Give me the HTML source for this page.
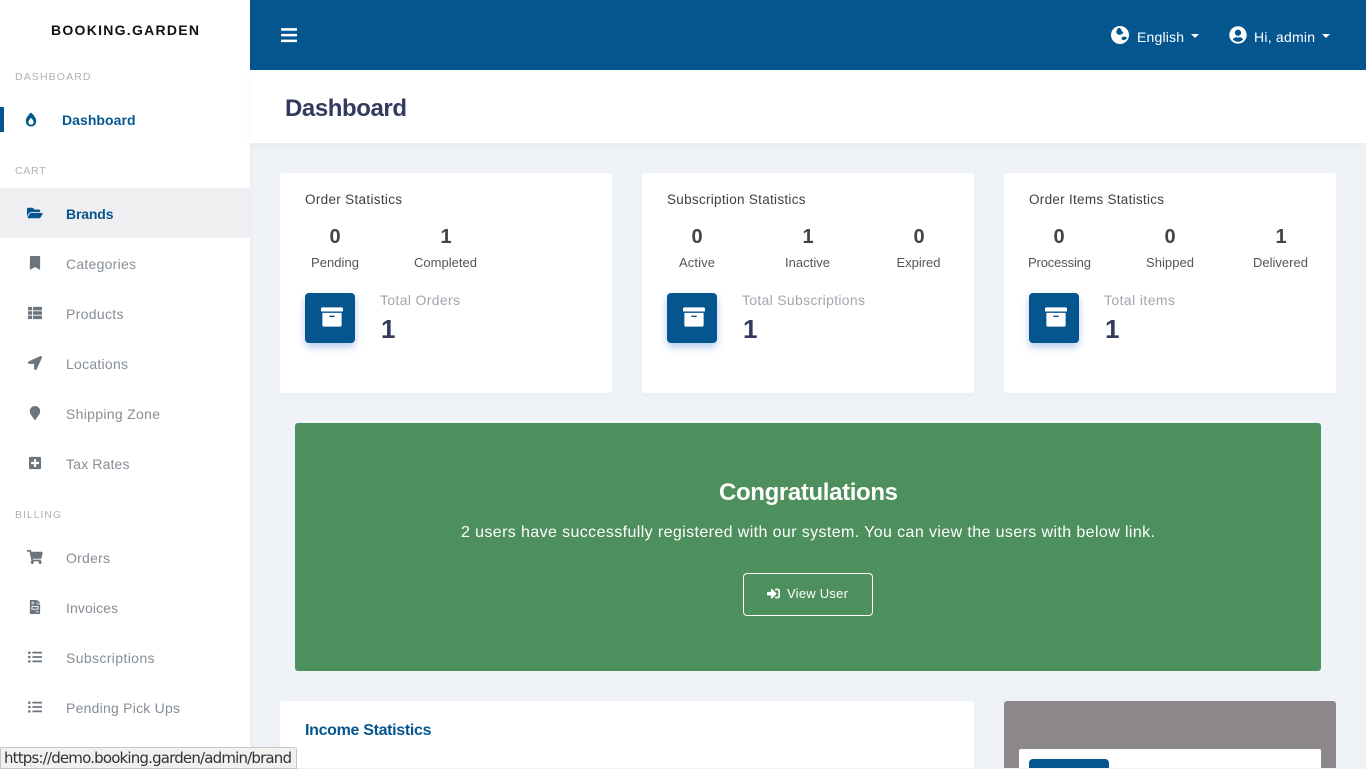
<!DOCTYPE html>
<html lang="en"><head><meta charset="utf-8"><title>Booking.Garden Dashboard</title>
<style>
html,body{margin:0;padding:0;width:1366px;height:768px;overflow:hidden;background:#eff2f6}
div{position:absolute;box-sizing:border-box}
.card{background:#fff;border-radius:3px;box-shadow:0 2px 6px rgba(0,0,0,.02)}
.ib{background:#05568f;border-radius:4px;width:50px;height:50px;top:293px;box-shadow:0 4px 8px rgba(5,86,200,.3)}
svg.o{position:absolute;left:0;top:0}
text{font-family:"Liberation Sans",sans-serif}
.s{fill:#868e96;font-size:14px}
.h{fill:#aeb2b7;font-size:10.5px}
.b{font-weight:700}
.ct{fill:#3f3f41;font-size:13.5px}
.n{fill:#444446;font-size:20px;font-weight:700;text-anchor:middle}
.l{fill:#555558;font-size:13px;text-anchor:middle}
.tt{fill:#a2a7ad;font-size:14px}
.v{fill:#34395e;font-size:26px;font-weight:700}
.w{fill:#fff}
</style></head><body>
<div style="left:0;top:0;width:250px;height:768px;background:#fff;box-shadow:0 0 6px rgba(0,0,0,.03)"></div>
<div style="left:0;top:107px;width:4px;height:25px;background:#05568f"></div>
<div style="left:0;top:188px;width:250px;height:50px;background:#efeef1"></div>
<div style="left:250px;top:0;width:1116px;height:70px;background:#05568f"></div>
<div style="left:250px;top:70px;width:1116px;height:73px;background:#fff;box-shadow:0 4px 8px rgba(0,0,0,.03)"></div>
<div class="card" style="left:280px;top:173px;width:332px;height:220px"></div>
<div class="card" style="left:642px;top:173px;width:332px;height:220px"></div>
<div class="card" style="left:1004px;top:173px;width:332px;height:220px"></div>
<div class="ib" style="left:305px"></div><div class="ib" style="left:667px"></div><div class="ib" style="left:1029px"></div>
<div style="left:295px;top:423px;width:1026px;height:248px;background:#4d8f5d;border-radius:3px"></div>
<div style="left:743px;top:573px;width:130px;height:43px;border:1px solid #fff;border-radius:4px"></div>
<div class="card" style="left:280px;top:701px;width:694px;height:67px;border-radius:3px 3px 0 0"></div>
<div style="left:1004px;top:701px;width:332px;height:67px;background:#8c878b;border-radius:3px 3px 0 0"></div>
<div style="left:1019px;top:749px;width:302px;height:19px;background:#fff;border-radius:2px 2px 0 0"></div>
<div style="left:1029px;top:759px;width:80px;height:9px;background:#05568f;border-radius:4px 4px 0 0"></div>

<svg class="o" width="1366" height="768" viewBox="0 0 1366 768" xmlns="http://www.w3.org/2000/svg">
<text x="51" y="35" textLength="148" font-size="14" font-weight="700" fill="#111">BOOKING.GARDEN</text>
<text class="h" x="15" y="80" textLength="75.5">DASHBOARD</text>
<text class="h" x="15" y="174" textLength="30.5">CART</text>
<text class="h" x="15" y="518" textLength="46">BILLING</text>
<text class="b" x="62" y="125" textLength="73.5" font-size="14" fill="#05568f">Dashboard</text>
<text class="b" x="66" y="219" textLength="47.5" font-size="14" fill="#05568f">Brands</text>
<text class="s" x="66" y="269" textLength="70">Categories</text>
<text class="s" x="66" y="319" textLength="57.5">Products</text>
<text class="s" x="66" y="369" textLength="62">Locations</text>
<text class="s" x="66" y="419" textLength="94">Shipping Zone</text>
<text class="s" x="66" y="469" textLength="63.5">Tax Rates</text>
<text class="s" x="66" y="563" textLength="44">Orders</text>
<text class="s" x="66" y="613" textLength="52">Invoices</text>
<text class="s" x="66" y="663" textLength="88.5">Subscriptions</text>
<text class="s" x="66" y="713" textLength="114">Pending Pick Ups</text>

<svg x="25.750" y="112.500" width="10.5" height="14" viewBox="0 0 384 512" fill="#05568f"><path d="M192 0C79.700 101.300 0 220.900 0 300.500 0 425 79 512 192 512s192-87 192-211.500c0-79.900-80.200-199.600-192-300.500zm0 448c-56.500 0-96-39-96-94.800 0-13.500 4.600-61.500 96-161.200 91.400 99.700 96 147.700 96 161.200 0 55.800-39.500 94.800-96 94.800z"/></svg>
<svg x="27" y="206" width="15.75" height="14" viewBox="0 0 576 512" fill="#05568f"><path d="M572.694 292.093L500.27 416.248A63.997 63.997 0 0 1 444.989 448H45.025c-18.523 0-30.064-20.093-20.731-36.093l72.424-124.155A64 64 0 0 1 152 256h399.964c18.523 0 30.064 20.093 20.73 36.093zM152 224h328v-48c0-26.51-21.49-48-48-48H272l-64-64H48C21.49 64 0 85.49 0 112v278.046l69.077-118.418C86.214 242.25 117.989 224 152 224z"/></svg>
<svg x="29.750" y="256" width="10.5" height="14" viewBox="0 0 384 512" fill="#6c757d"><path d="M0 512V48C0 21.49 21.49 0 48 0h288c26.51 0 48 21.49 48 48v464L192 400 0 512z"/></svg>
<svg x="28" y="306" width="14" height="14" viewBox="0 0 512 512" fill="#6c757d"><path d="M149.333 216v80c0 13.255-10.745 24-24 24H24c-13.255 0-24-10.745-24-24v-80c0-13.255 10.745-24 24-24h101.333c13.255 0 24 10.745 24 24zM0 376v80c0 13.255 10.745 24 24 24h101.333c13.255 0 24-10.745 24-24v-80c0-13.255-10.745-24-24-24H24c-13.255 0-24 10.745-24 24zM125.333 32H24C10.745 32 0 42.745 0 56v80c0 13.255 10.745 24 24 24h101.333c13.255 0 24-10.745 24-24V56c0-13.255-10.745-24-24-24zm80 448H488c13.255 0 24-10.745 24-24v-80c0-13.255-10.745-24-24-24H205.333c-13.255 0-24 10.745-24 24v80c0 13.255 10.745 24 24 24zm-24-424v80c0 13.255 10.745 24 24 24H488c13.255 0 24-10.745 24-24V56c0-13.255-10.745-24-24-24H205.333c-13.255 0-24 10.745-24 24zm24 264H488c13.255 0 24-10.745 24-24v-80c0-13.255-10.745-24-24-24H205.333c-13.255 0-24 10.745-24 24v80c0 13.255 10.745 24 24 24z"/></svg>
<svg x="28" y="356" width="14" height="14" viewBox="0 0 512 512" fill="#6c757d"><path d="M444.52 3.52L28.74 195.42c-47.97 22.39-31.98 92.75 19.19 92.75h175.91v175.91c0 51.17 70.36 67.17 92.75 19.19l191.9-415.78c15.99-38.39-25.59-79.97-63.97-63.97z"/></svg>
<svg x="29.750" y="406" width="10.5" height="14" viewBox="0 0 384 512" fill="#6c757d"><path d="M172.268 501.67C26.97 291.031 0 269.413 0 192 0 85.961 85.961 0 192 0s192 85.961 192 192c0 77.413-26.97 99.031-172.268 309.67-9.535 13.774-29.93 13.773-39.464 0z"/></svg>
<svg x="28.900" y="456" width="12.25" height="14" viewBox="0 0 448 512" fill="#6c757d"><path d="M400 32H48C21.5 32 0 53.5 0 80v352c0 26.5 21.5 48 48 48h352c26.5 0 48-21.5 48-48V80c0-26.5-21.5-48-48-48zm-32 252c0 6.6-5.4 12-12 12h-92v92c0 6.6-5.4 12-12 12h-56c-6.6 0-12-5.4-12-12v-92H92c-6.6 0-12-5.4-12-12v-56c0-6.6 5.4-12 12-12h92v-92c0-6.6 5.4-12 12-12h56c6.6 0 12 5.4 12 12v92h92c6.6 0 12 5.4 12 12v56z"/></svg>
<svg x="27" y="550" width="15.75" height="14" viewBox="0 0 576 512" fill="#6c757d"><path d="M528.12 301.319l47.273-208C578.806 78.301 567.391 64 551.99 64H159.208l-9.166-44.81C147.758 8.021 137.93 0 126.529 0H24C10.745 0 0 10.745 0 24v16c0 13.255 10.745 24 24 24h69.883l70.248 343.435C147.325 417.1 136 435.222 136 456c0 30.928 25.072 56 56 56s56-25.072 56-56c0-15.674-6.447-29.835-16.824-40h209.647C430.447 426.165 424 440.326 424 456c0 30.928 25.072 56 56 56s56-25.072 56-56c0-22.172-12.888-41.332-31.579-50.405l5.517-24.276c3.413-15.018-8.002-29.319-23.403-29.319H218.117l-6.545-32h293.145c11.206 0 20.92-7.754 23.403-18.681z"/></svg>
<svg x="29.750" y="600" width="10.5" height="14" viewBox="0 0 384 512" fill="#6c757d"><path d="M288 256H96v64h192v-64zm89-151L279.1 7c-4.500-4.500-10.600-7-17-7H256v128h128v-6.100c0-6.300-2.500-12.400-7-16.900zm-129 23V0H24C10.700 0 0 10.700 0 24v464c0 13.300 10.700 24 24 24h336c13.300 0 24-10.700 24-24V160H272c-13.200 0-24-10.800-24-24zM64 72c0-4.420 3.580-8 8-8h80c4.420 0 8 3.580 8 8v16c0 4.420-3.580 8-8 8H72c-4.420 0-8-3.580-8-8V72zm0 64c0-4.420 3.580-8 8-8h80c4.420 0 8 3.580 8 8v16c0 4.420-3.580 8-8 8H72c-4.420 0-8-3.580-8-8v-16zm256 304c0 4.420-3.580 8-8 8h-80c-4.420 0-8-3.580-8-8v-16c0-4.420 3.580-8 8-8h80c4.420 0 8 3.580 8 8v16zm0-200v96c0 8.840-7.160 16-16 16H80c-8.840 0-16-7.160-16-16v-96c0-8.840 7.160-16 16-16h224c8.840 0 16 7.160 16 16z"/></svg>
<svg x="28" y="650" width="14" height="14" viewBox="0 0 512 512" fill="#6c757d"><path d="M48 48a48 48 0 1 0 48 48 48 48 0 0 0-48-48zm0 160a48 48 0 1 0 48 48 48 48 0 0 0-48-48zm0 160a48 48 0 1 0 48 48 48 48 0 0 0-48-48zm448 16H176a16 16 0 0 0-16 16v32a16 16 0 0 0 16 16h320a16 16 0 0 0 16-16v-32a16 16 0 0 0-16-16zm0-320H176a16 16 0 0 0-16 16v32a16 16 0 0 0 16 16h320a16 16 0 0 0 16-16V80a16 16 0 0 0-16-16zm0 160H176a16 16 0 0 0-16 16v32a16 16 0 0 0 16 16h320a16 16 0 0 0 16-16v-32a16 16 0 0 0-16-16z"/></svg>
<svg x="28" y="700" width="14" height="14" viewBox="0 0 512 512" fill="#6c757d"><path d="M48 48a48 48 0 1 0 48 48 48 48 0 0 0-48-48zm0 160a48 48 0 1 0 48 48 48 48 0 0 0-48-48zm0 160a48 48 0 1 0 48 48 48 48 0 0 0-48-48zm448 16H176a16 16 0 0 0-16 16v32a16 16 0 0 0 16 16h320a16 16 0 0 0 16-16v-32a16 16 0 0 0-16-16zm0-320H176a16 16 0 0 0-16 16v32a16 16 0 0 0 16 16h320a16 16 0 0 0 16-16V80a16 16 0 0 0-16-16zm0 160H176a16 16 0 0 0-16 16v32a16 16 0 0 0 16 16h320a16 16 0 0 0 16-16v-32a16 16 0 0 0-16-16z"/></svg>

<svg x="281" y="26" width="16" height="18.300" viewBox="0 0 448 512" fill="#fff"><path d="M16 132h416c8.837 0 16-7.163 16-16V76c0-8.837-7.163-16-16-16H16C7.163 60 0 67.163 0 76v40c0 8.837 7.163 16 16 16zm0 160h416c8.837 0 16-7.163 16-16v-40c0-8.837-7.163-16-16-16H16c-8.837 0-16 7.163-16 16v40c0 8.837 7.163 16 16 16zm0 160h416c8.837 0 16-7.163 16-16v-40c0-8.837-7.163-16-16-16H16c-8.837 0-16 7.163-16 16v40c0 8.837 7.163 16 16 16z"/></svg>
<svg x="1111" y="26" width="18" height="18" viewBox="0 0 18 18"><circle cx="9" cy="9" r="9" fill="#fff"/><path d="M8.500 1.800C6.600 2.200 5.800 3.400 6 4.600c-.9.500-1.200 1.500-.5 2.300.7.800 1 1.700 2 1.900 1 .2 2.200.1 2.800-.6.600-.7 1.800-.3 2-1.200.2-.9-.8-1.300-1.400-1.900-.6-.6-.3-1.300-.9-1.900-.5-.5-1-1-1.500-1.400z" fill="#05568f"/><path d="M11.200 11.200c1.200-.6 2.700-.7 4.300-.2.500.2.500.8.200 1.300-.7 1.100-1.800 1.900-3 1.800-1 0-2-.4-2.100-1.300-.1-.7 0-1.300.6-1.600z" fill="#05568f"/></svg>
<text class="w" x="1137" y="42" textLength="47" font-size="14">English</text>
<polygon points="1191,34 1199,34 1195,38" fill="#fff"/>
<svg x="1229" y="26" width="18" height="18" viewBox="0 0 496 512" fill="#fff"><path d="M248 8C111 8 0 119 0 256s111 248 248 248 248-111 248-248S385 8 248 8zm0 96c48.600 0 88 39.400 88 88s-39.400 88-88 88-88-39.400-88-88 39.400-88 88-88zm0 344c-58.700 0-111.300-26.600-146.500-68.200 18.800-35.400 55.600-59.800 98.500-59.800 2.400 0 4.800.4 7.100 1.100 13 4.200 26.600 6.900 40.900 6.900 14.300 0 28-2.700 40.900-6.900 2.300-.7 4.700-1.100 7.100-1.100 42.900 0 79.700 24.400 98.500 59.800C359.300 421.400 306.700 448 248 448z"/></svg>
<text class="w" x="1254" y="42" textLength="61" font-size="14">Hi, admin</text>
<polygon points="1322,34 1330,34 1326,38" fill="#fff"/>

<text x="285" y="116" textLength="122" font-size="24" font-weight="700" fill="#34395e">Dashboard</text>

<text class="ct" x="305" y="204" textLength="97">Order Statistics</text>
<text class="n" x="335" y="243">0</text><text class="n" x="446" y="243">1</text>
<text class="l" x="335" y="267" textLength="48">Pending</text>
<text class="l" x="445.500" y="267" textLength="63">Completed</text>
<text class="tt" x="380" y="305" textLength="80">Total Orders</text>
<text class="v" x="381" y="338">1</text>

<text class="ct" x="667" y="204" textLength="138.500">Subscription Statistics</text>
<text class="n" x="697" y="243">0</text><text class="n" x="808" y="243">1</text><text class="n" x="919" y="243">0</text>
<text class="l" x="697" y="267" textLength="36">Active</text>
<text class="l" x="807.500" y="267" textLength="45">Inactive</text>
<text class="l" x="918.500" y="267" textLength="44">Expired</text>
<text class="tt" x="742" y="305" textLength="123">Total Subscriptions</text>
<text class="v" x="743" y="338">1</text>

<text class="ct" x="1029" y="204" textLength="135">Order Items Statistics</text>
<text class="n" x="1059" y="243">0</text><text class="n" x="1170" y="243">0</text><text class="n" x="1281" y="243">1</text>
<text class="l" x="1059.500" y="267" textLength="63">Processing</text>
<text class="l" x="1170" y="267" textLength="48">Shipped</text>
<text class="l" x="1280.500" y="267" textLength="55">Delivered</text>
<text class="tt" x="1104" y="305" textLength="71">Total items</text>
<text class="v" x="1105" y="338">1</text>

<svg x="321" y="306" width="22" height="22" viewBox="0 0 512 512" fill="#fff"><path d="M32 448c0 17.700 14.300 32 32 32h384c17.700 0 32-14.300 32-32V160H32v288zm160-212c0-6.600 5.400-12 12-12h104c6.600 0 12 5.400 12 12v8c0 6.600-5.400 12-12 12H204c-6.600 0-12-5.400-12-12v-8zM480 32H32C14.300 32 0 46.300 0 64v48c0 8.800 7.200 16 16 16h480c8.800 0 16-7.200 16-16V64c0-17.700-14.300-32-32-32z"/></svg>
<svg x="683" y="306" width="22" height="22" viewBox="0 0 512 512" fill="#fff"><path d="M32 448c0 17.700 14.300 32 32 32h384c17.700 0 32-14.300 32-32V160H32v288zm160-212c0-6.600 5.400-12 12-12h104c6.600 0 12 5.400 12 12v8c0 6.600-5.400 12-12 12H204c-6.600 0-12-5.400-12-12v-8zM480 32H32C14.300 32 0 46.300 0 64v48c0 8.800 7.200 16 16 16h480c8.800 0 16-7.200 16-16V64c0-17.700-14.300-32-32-32z"/></svg>
<svg x="1045" y="306" width="22" height="22" viewBox="0 0 512 512" fill="#fff"><path d="M32 448c0 17.700 14.300 32 32 32h384c17.700 0 32-14.300 32-32V160H32v288zm160-212c0-6.600 5.400-12 12-12h104c6.600 0 12 5.400 12 12v8c0 6.600-5.400 12-12 12H204c-6.600 0-12-5.400-12-12v-8zM480 32H32C14.300 32 0 46.300 0 64v48c0 8.800 7.200 16 16 16h480c8.800 0 16-7.200 16-16V64c0-17.700-14.300-32-32-32z"/></svg>

<text class="w" x="719" y="500" textLength="179" font-size="24" font-weight="700">Congratulations</text>
<text class="w" x="461" y="537" textLength="694" font-size="16">2 users have successfully registered with our system. You can view the users with below link.</text>
<svg x="767" y="587" width="13" height="13" viewBox="0 0 512 512" fill="#fff"><path d="M416 448h-84c-6.600 0-12-5.400-12-12v-40c0-6.600 5.400-12 12-12h84c17.700 0 32-14.300 32-32V160c0-17.700-14.300-32-32-32h-84c-6.600 0-12-5.400-12-12V76c0-6.600 5.400-12 12-12h84c53 0 96 43 96 96v192c0 53-43 96-96 96zm-47-201L201 79c-15-15-41-4.500-41 17v96H24c-13.300 0-24 10.700-24 24v96c0 13.300 10.700 24 24 24h136v96c0 21.500 26 32 41 17l168-168c9.300-9.400 9.300-24.600 0-34z"/></svg>
<text class="w" x="787" y="598" textLength="61" font-size="13">View User</text>

<text x="305" y="735" textLength="126.500" font-size="16" font-weight="700" fill="#05568f">Income Statistics</text>
</svg>

<div style="left:0;top:747px;width:297px;height:22px;background:#f2f1f0;border:1px solid #c8c4bf;border-radius:0 3px 0 0"></div>
<svg class="o" width="1366" height="768" viewBox="0 0 1366 768" xmlns="http://www.w3.org/2000/svg">
<text x="4" y="763" textLength="288" font-size="15" fill="#2e3436" style="font-family:'DejaVu Sans',sans-serif">https://demo.booking.garden/admin/brand</text>
</svg>
</body></html>
